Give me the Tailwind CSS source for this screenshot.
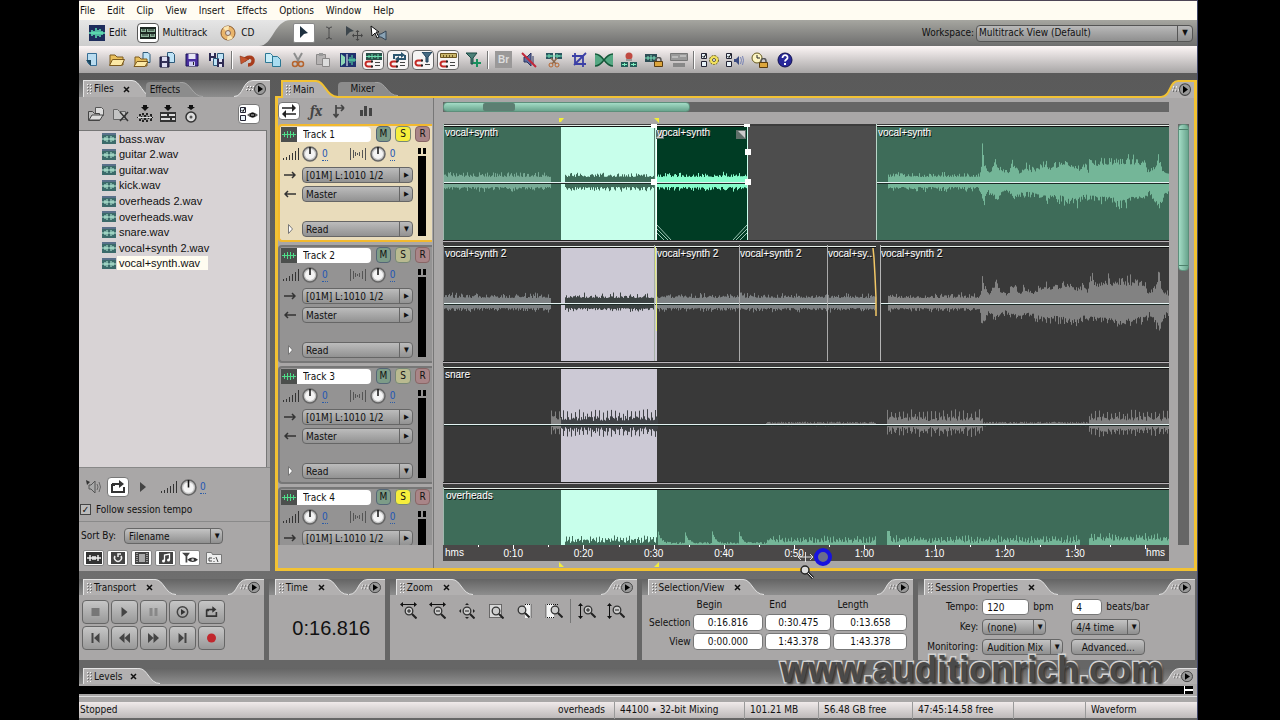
<!DOCTYPE html>
<html lang="en">
<head>
  <meta charset="UTF-8" />
  <title>Audition - Multitrack View</title>
  <meta name="viewport" content="width=device-width, initial-scale=1.0" />
  <script src="https://cdn.jsdelivr.net/npm/@tailwindcss/browser@4"></script>
  <style>
    body { font-family: "DejaVu Sans Condensed", "Liberation Sans", sans-serif; }
    .arial { font-family: "Liberation Sans", Arial, sans-serif; }
    .clip-label { text-shadow: 1px 1px 0 #000, 1px 0 0 #fff6; }
    .watermark { -webkit-text-stroke: 3px #d4d4d4; paint-order: stroke fill; text-shadow: 2px 2px 2px #333; }
  </style>
</head>
<body class="bg-black text-[10px] leading-[14px] text-[#111]">

  <!-- Icon sheet -->
  <svg class="hidden">
    <symbol id="tail" viewBox="0 0 24 17" preserveAspectRatio="none"><path d="M0 .5h2C11 .5 12 16.5 23 16.5V17H0z" fill="#b2b0b0"/><path d="M0 .5h2C11 .5 12 16.5 23 16.5" fill="none" stroke="#e4e4e4"/></symbol>
    <symbol id="tail-dim" viewBox="0 0 24 17" preserveAspectRatio="none"><path d="M0 .5h2C11 .5 12 16.5 23 16.5V17H0z" fill="#8c8c8c"/><path d="M0 .5h2C11 .5 12 16.5 23 16.5" fill="none" stroke="#a8a8a8"/></symbol>
    <symbol id="tail-gold" viewBox="0 0 24 17" preserveAspectRatio="none"><path d="M0 1h2C11 1 12 16 23 16V17H0z" fill="#b2b0b0"/><path d="M0 1h2C11 1 12 16 24 16" fill="none" stroke="#f2c233" stroke-width="2"/></symbol>
    <symbol id="dots" viewBox="0 0 8 12"><path d="M1 1h1v1H1zM4 1h1v1H4zM1 4h1v1H1zM4 4h1v1H4zM1 7h1v1H1zM4 7h1v1H4zM1 10h1v1H1zM4 10h1v1H4z" fill="#f4f4f4"/><path d="M2 2h1v1H2zM5 2h1v1H5zM2 5h1v1H2zM5 5h1v1H5zM2 8h1v1H2zM5 8h1v1H5z" fill="#666"/></symbol>
    <symbol id="menu-end" viewBox="0 0 36 17" preserveAspectRatio="none"><path d="M0 16.5C10 16.5 8 .5 19 .5H36V17H0z" fill="#b2b0b0"/><path d="M0 16.5C10 16.5 8 .5 19 .5H36" fill="none" stroke="#e4e4e4"/><path d="M12 9h1v1h-1zM15 9h1v1h-1zM18 9h1v1h-1zM13 6h1v1h-1zM16 6h1v1h-1zM19 6h1v1h-1z" fill="#fff"/><path d="M13 10h1v1h-1zM16 10h1v1h-1zM14 7h1v1h-1zM17 7h1v1h-1z" fill="#555"/><circle cx="26" cy="9" r="5.5" fill="#999" stroke="#444"/><path d="M24 5.5v7l5-3.500z" fill="#000"/></symbol>
    <symbol id="menu-end-gold" viewBox="0 0 36 17" preserveAspectRatio="none"><path d="M0 16C10 16 8 1 17 1H36V17H0z" fill="#b2b0b0"/><path d="M0 16C10 16 8 1 17 1H36" fill="none" stroke="#f2c233" stroke-width="2"/><path d="M11 9h1v1h-1zM14 9h1v1h-1zM17 9h1v1h-1zM12 6h1v1h-1zM15 6h1v1h-1z" fill="#fff"/><path d="M12 10h1v1h-1zM15 10h1v1h-1zM13 7h1v1h-1z" fill="#555"/><circle cx="24" cy="9" r="5.500" fill="#999" stroke="#444"/><path d="M22 5.500v7l5-3.500z" fill="#000"/><path d="M34.500 0v17" stroke="#f2c233" stroke-width="3"/></symbol>
    <symbol id="close" viewBox="0 0 7 7"><path d="M1 1l5 5M6 1L1 6" stroke="#111" stroke-width="1.500"/></symbol>

    <symbol id="i-wave" viewBox="0 0 16 16"><path d="M0 0h16v16H0z" fill="#1d2c5c"/><path d="M0 8h16M3 5v6M5 6v4M7 3v10M9 5v6M11 4v8M13 6v4" stroke="#5fe3b4" stroke-width="1.500"/></symbol>
    <symbol id="i-multi" viewBox="0 0 16 16"><path d="M0 2h16v12H0z" fill="#1c2722"/><path d="M1 4h5v3H1zM7 4h8v3H7zM1 9h8v3H1zM10 9h5v3h-5z" fill="#8fb59c"/><path d="M2 5h3M8 5h6M2 10h6M11 10h3" stroke="#1c2722"/></symbol>
    <symbol id="i-cd" viewBox="0 0 16 16"><circle cx="8" cy="8" r="7" fill="#e9b56b" stroke="#8a5a2e"/><path d="M8 8L3 3a7 7 0 0 1 6-2zM8 8l5 5a7 7 0 0 1-6 2z" fill="#fbe7b4"/><circle cx="8" cy="8" r="2.500" fill="#ddd" stroke="#865"/></symbol>
    <symbol id="i-arrow" viewBox="0 0 16 16"><path d="M4 1l8 7-4 1-4 4z" fill="#1f3140"/></symbol>
    <symbol id="i-ibeam" viewBox="0 0 16 16"><path d="M5 2q3 0 3 2q0-2 3-2M8 3v10M5 14q3 0 3-2q0 2 3 2" stroke="#4c4c4c" fill="none"/></symbol>
    <symbol id="i-move" viewBox="0 0 18 16"><path d="M1 1l8 5-4 1-4 4z" fill="#3d464c"/><path d="M8 10.500h9M12.500 6v9" stroke="#444"/><path d="M7 10.500l2-2v4zM18 10.500l-2-2v4zM12.500 5l-2 2h4zM12.500 16l-2-2h4z" fill="#444"/></symbol>
    <symbol id="i-scrub" viewBox="0 0 18 16"><path d="M1 1l8 6H6l3 5-2 1-2-5-3 3z" fill="#fff" stroke="#111"/><path d="M9 9h2l5-3v9l-5-3H9z" fill="#8aa3b5" stroke="#345"/></symbol>

    <symbol id="i-new" viewBox="0 0 16 16"><path d="M3.500 1.500h9v12h-6l-3-3z" fill="#b9dcf0" stroke="#356d95"/><path d="M2 8h5v6z" fill="#18465f"/></symbol>
    <symbol id="i-open" viewBox="0 0 18 16"><path d="M2 13V3h5l2 2h6v8z" fill="#e9bf5c" stroke="#7c5a1e"/><path d="M1.500 13.500l3-6h12l-3 6z" fill="#fce9a6" stroke="#7c5a1e"/></symbol>
    <symbol id="i-open2" viewBox="0 0 18 16"><path d="M10 .5h5l2 2v8h-7z" fill="#bfe3f6" stroke="#2d5a7a"/><path d="M2 14V5h4l2 2h6v7z" fill="#e9bf5c" stroke="#7c5a1e"/><path d="M1 14.500l3-5h11l-3 5z" fill="#fce9a6" stroke="#7c5a1e"/></symbol>
    <symbol id="i-save" viewBox="0 0 16 16"><path d="M2 2h12v12H2z" fill="#4a2f9e" stroke="#1b1556"/><path d="M4.500 2h7v5h-7z" fill="#e6e6f5"/><path d="M5 9.500h6V14H5z" fill="#cfcff2"/><path d="M9 10h1v3H9z" fill="#222"/></symbol>
    <symbol id="i-save2" viewBox="0 0 18 16"><path d="M9.500.5h5l2 2v8h-7z" fill="#bfe3f6" stroke="#2d5a7a"/><path d="M2 5h9v10H2z" fill="#353258" stroke="#15143a"/><path d="M4 5h5v4H4zM4 11h5v4H4z" fill="#dcdcf0"/></symbol>
    <symbol id="i-saveall" viewBox="0 0 18 16"><path d="M1 1h7v8H1z" fill="#2e2b52"/><path d="M3 1h3v3H3zM3 6h3v3H3z" fill="#e5e5f4"/><path d="M9.500 1.500h6v7h-6zM5.500 6.500h5v7h-5z" fill="#bfe3f6" stroke="#2d5a7a"/><path d="M9 7h7v8H9z" fill="#2e2b52"/><path d="M11 7h3v3h-3zM11 12h3v3h-3z" fill="#e5e5f4"/></symbol>
    <symbol id="i-undo" viewBox="0 0 18 16"><path d="M5 9C7 4 15 4 14 9c0 2-2 4-5 4" fill="none" stroke="#a83c1c" stroke-width="3.500"/><path d="M1 4l9 3-8 5z" fill="#c4552e" stroke="#7a2a10" stroke-width=".5"/></symbol>
    <symbol id="i-copy" viewBox="0 0 18 16"><path d="M1.500 1.500h5l2 2v7h-7z" fill="#c9edf8" stroke="#2b7794"/><path d="M8.500 4.500h5l3 3v7h-8z" fill="#a9dcf0" stroke="#2b7794"/></symbol>
    <symbol id="i-cut" viewBox="0 0 16 16"><path d="M4 1l5 9M12 1L7 10" stroke="#8d8d8d" stroke-width="2"/><circle cx="5" cy="12" r="2.500" fill="none" stroke="#b5642e" stroke-width="1.500"/><circle cx="11" cy="12" r="2.500" fill="none" stroke="#b5642e" stroke-width="1.500"/></symbol>
    <symbol id="i-paste" viewBox="0 0 16 16"><path d="M1.500 2.500h9v10h-9z" fill="#b5b2b2" stroke="#8a8888"/><path d="M4 1h4v3H4z" fill="#999"/><path d="M7.500 6.500h7v8h-7z" fill="#ddd" stroke="#8a8888"/></symbol>
    <symbol id="i-session" viewBox="0 0 16 16"><path d="M0 1h16v14H0z" fill="#20306e"/><path d="M1 2l4 3v6l-4 3z" fill="#8fd7b6"/><path d="M7 2v12" stroke="#fff"/><path d="M8 8h8M10 5v6M12 3v10M14 6v4" stroke="#58e3a8"/></symbol>
    <symbol id="magnet" viewBox="0 0 10 8"><path d="M8 1.500H4a2.500 2.500 0 0 0 0 5h4" fill="none" stroke="#c32a26" stroke-width="2"/><path d="M7 .5h2v2H7zM7 5.500h2v2H7z" fill="#222"/></symbol>
    <symbol id="i-snap1" viewBox="0 0 18 16"><path d="M2 1h16v7H2z" fill="#29504a"/><path d="M2 4.500h16M5 3v3M8 2v5M11 3v3M14 2v5" stroke="#6fdfb0"/><use href="#magnet" x="0" y="8" width="10" height="8"/><path d="M11 10h5v1h-5zM11 13h5v1h-5z" fill="#444"/></symbol>
    <symbol id="i-snap2" viewBox="0 0 18 16"><path d="M5 7V3h8M16 3v4H9" stroke="#2c5670" stroke-width="2" fill="none"/><path d="M12 0l4 3-4 3zM10 4l-4 3 4 3z" fill="#2c5670"/><use href="#magnet" x="0" y="8" width="10" height="8"/><path d="M11 10h5v1h-5zM11 13h5v1h-5z" fill="#444"/></symbol>
    <symbol id="i-snap3" viewBox="0 0 18 16"><path d="M8 0h10l-4 5v5h-2V5z" fill="#476b83" stroke="#1d3f59"/><use href="#magnet" x="0" y="7" width="10" height="8"/><path d="M11 12h5v1h-5z" fill="#444"/></symbol>
    <symbol id="i-snap4" viewBox="0 0 18 16"><path d="M1.500 1.500h16v4h-16z" fill="#c9b56a" stroke="#6a5520"/><path d="M4.500 3v3M7.500 3v3M10.500 3v3M13.500 3v3" stroke="#6a5520"/><use href="#magnet" x="0" y="8" width="10" height="8"/><path d="M11 10h5v1h-5zM11 13h5v1h-5z" fill="#444"/></symbol>
    <symbol id="i-funnel" viewBox="0 0 16 16"><path d="M1 1h11L8 6v6H6V6z" fill="#4b8078" stroke="#1d4a45"/><path d="M12 7v8M8 11h8" stroke="#19905e" stroke-width="2"/></symbol>
    <symbol id="i-mute" viewBox="0 0 16 16"><path d="M3 5h3l4-4v13l-4-4H3z" fill="#5c6aa0" stroke="#2a3463"/><path d="M12 4v8" stroke="#2a3463"/><path d="M1 1l14 14" stroke="#c2283a" stroke-width="2"/></symbol>
    <symbol id="i-split" viewBox="0 0 16 16"><path d="M0 1h7v6H0zM9 1h7v6H9z" fill="#2b5660"/><path d="M0 4h16M3 2v4M5 3v2M11 2v4M13 3v2" stroke="#72e0b5"/><path d="M5 6l5 6M11 6l-5 6" stroke="#8b6a50" stroke-width="1.500"/><circle cx="5" cy="13" r="2" fill="none" stroke="#b8662f"/><circle cx="11" cy="13" r="2" fill="none" stroke="#b8662f"/></symbol>
    <symbol id="i-crop" viewBox="0 0 16 16"><path d="M4 1v11h11M1 4h11v11M3 13L15 1" stroke="#3b3fa6" stroke-width="1.800" fill="none"/></symbol>
    <symbol id="i-fade" viewBox="0 0 18 16"><path d="M0 2c9 0 9 12 18 12V2C9 2 9 14 0 14z" fill="#55a883"/><path d="M0 2c9 0 9 12 18 12M0 14C9 14 9 2 18 2" stroke="#15583a" fill="none" stroke-width="1.500"/></symbol>
    <symbol id="i-merge" viewBox="0 0 16 16"><circle cx="8" cy="4" r="3.500" fill="#c04a42"/><path d="M5 7h6v2H5z" fill="#999"/><path d="M0 10h7v5H0zM9 10h7v5H9z" fill="#245d59"/><path d="M1 12.500h5M10 12.500h5M3.500 11v3M12.500 11v3" stroke="#7ff0c0"/></symbol>
    <symbol id="padlock" viewBox="0 0 9 10"><path d="M2 5V3a2.500 2.500 0 0 1 5 0v2" fill="none" stroke="#555" stroke-width="1.500"/><path d="M.5 4.500h8v5h-8z" fill="#dda63c" stroke="#5a3d10"/></symbol>
    <symbol id="i-lock" viewBox="0 0 18 16"><path d="M0 2h12v8H0z" fill="#2d4d55"/><path d="M0 6h12M3 4v4M6 3v6M9 4v4" stroke="#7fe3bc"/><use href="#padlock" x="9" y="5" width="9" height="10"/></symbol>
    <symbol id="i-group" viewBox="0 0 18 16"><path d="M.5 1.500h17v7H.5z" fill="#999" stroke="#777"/><path d="M2 5h6M10 4h6" stroke="#ddd"/><path d="M3 11h12v4H3z" fill="#888"/></symbol>
    <symbol id="checks" viewBox="0 0 6 14"><path d="M.5.5h5v5h-5zM.5 8.500h5v5h-5z" fill="#e8f2f8" stroke="#223"/><path d="M1.500 3l1.500 1.500L5 1" stroke="#000" fill="none"/></symbol>
    <symbol id="i-gear" viewBox="0 0 18 16"><use href="#checks" x="0" y="1" width="6" height="14"/><circle cx="13" cy="8" r="4.500" fill="#f3e25c" stroke="#6b6020" stroke-dasharray="2 1"/><circle cx="13" cy="8" r="1.500" fill="#fff" stroke="#554"/></symbol>
    <symbol id="i-sound" viewBox="0 0 18 16"><use href="#checks" x="0" y="1" width="6" height="14"/><path d="M8 7h2l3-3v9l-3-3H8z" fill="#3b4a80"/><path d="M14.500 5q2 3 0 7M16.500 4q2 4 0 9" stroke="#7782b5" fill="none"/></symbol>
    <symbol id="i-clock" viewBox="0 0 18 16"><circle cx="6" cy="6" r="5" fill="#fdf5c4" stroke="#665a20"/><path d="M6 3v3h3" stroke="#222" fill="none"/><use href="#padlock" x="8" y="6" width="9" height="10"/></symbol>
    <symbol id="i-help" viewBox="0 0 16 16"><circle cx="8" cy="8" r="7" fill="#28289a" stroke="#11114f"/><path d="M5.500 6c0-4 5.500-3.500 5 0-.3 1.500-2.500 1.500-2.500 3.500" stroke="#fff" stroke-width="1.800" fill="none"/><path d="M7 11h2v2H7z" fill="#fff"/></symbol>

    <symbol id="i-fopen" viewBox="0 0 18 16"><path d="M8.500 1.500h6l2 2v6h-8z" fill="#ddd" stroke="#555"/><path d="M1.500 14.500v-9h4l2 2h5v7z" fill="#bbb" stroke="#444"/><path d="M2 14l3-5h11l-3 5z" fill="#ddd" stroke="#444"/></symbol>
    <symbol id="i-fclose" viewBox="0 0 18 16"><path d="M1.500 13.500v-10h4l2 2h6v8z" fill="#c4c4c4" stroke="#666"/><path d="M8 6l8 9M16 6l-8 9" stroke="#333" stroke-width="1.500"/></symbol>
    <symbol id="i-inswave" viewBox="0 0 16 18"><path d="M6 0h4v2h2L8 6 4 2h2z" fill="#111"/><path d="M0 12h2V9h2v2h1V8h2v2h2V8h2v3h2V9h2v3h1v1h-1v3h-2v-2h-2v3H9v-2H7v2H5v-3H4v2H2v-3H0z" fill="#222"/><path d="M1 12.500h14M3 11v3M6 10v5M10 10v5M13 11v3" stroke="#ddd"/></symbol>
    <symbol id="i-insmulti" viewBox="0 0 16 18"><path d="M6 0h4v2h2L8 6 4 2h2z" fill="#111"/><path d="M0 7h16v10H0z" fill="#333"/><path d="M1 9h6v2H1zM9 9h6v2H9zM1 13h9v2H1zM12 13h3v2h-3z" fill="#ddd"/></symbol>
    <symbol id="i-inscd" viewBox="0 0 16 18"><path d="M6 0h4v2h2L8 5 4 2h2z" fill="#111"/><circle cx="8" cy="12" r="5" fill="#ddd" stroke="#333" stroke-width="1.500"/><circle cx="8" cy="12" r="1.500" fill="#555"/></symbol>
    <symbol id="i-eye" viewBox="0 0 18 14"><use href="#checks" x="0" y="0" width="6" height="14"/><path d="M7 8q5-5 11 0q-5 5-11 0z" fill="#555"/><circle cx="12.500" cy="8" r="2.500" fill="#111"/><path d="M11 8h3" stroke="#ccc"/></symbol>
    <symbol id="i-fileico" viewBox="0 0 14 11"><path d="M0 0h14v11H0z" fill="#3b6a6a"/><path d="M0 0h14v2H0z" fill="#59708a"/><path d="M0 6h14M3 4v4M5 3v6M9 3v6M11 4v4" stroke="#bff5de"/></symbol>
    <symbol id="i-swap" viewBox="0 0 16 16"><path d="M1 5h13M2 11h13" stroke="#222" stroke-width="1.500"/><path d="M11 1l4 4-4 4zM5 7l-4 4 4 4z" fill="#222"/></symbol>
    <symbol id="i-send" viewBox="0 0 16 16"><path d="M4 2v12M4 5h8M12 5l-3-3M12 5l-3 3M1.500 11L4 14l2.500-3" stroke="#444" stroke-width="1.700" fill="none"/></symbol>
    <symbol id="i-eq" viewBox="0 0 16 16"><path d="M2 7h3v6H2zM6 3h3v10H6zM11 5h3v8h-3z" fill="#444"/></symbol>
    <symbol id="i-vol" viewBox="0 0 16 12"><path d="M.5 10v2M3.500 9v3M6.500 7v5M9.500 5v7M12.500 3v9M15.500 0v12" stroke="#333"/></symbol>
    <symbol id="i-pan" viewBox="0 0 16 12"><path d="M.5 0v12M3.500 2v8M5.500 4v4M7.500 5v2M9.500 4v4M12.500 2v8M15.500 0v12" stroke="#555"/></symbol>
    <symbol id="i-knob" viewBox="0 0 16 16"><circle cx="8" cy="8" r="7" fill="#c4c4c4" stroke="#666" stroke-width="1.500"/><circle cx="8" cy="8" r="5" fill="#f4f4f4"/><path d="M8 1v7" stroke="#111" stroke-width="1.500"/></symbol>
    <symbol id="i-in" viewBox="0 0 12 8"><path d="M0 4h11M8 1l3 3-3 3" stroke="#333" stroke-width="1.500" fill="none"/></symbol>
    <symbol id="i-out" viewBox="0 0 12 8"><path d="M12 4H1M4 1L1 4l3 3" stroke="#333" stroke-width="1.500" fill="none"/></symbol>
    <symbol id="i-trk" viewBox="0 0 16 15"><path d="M0 0h16v15H0z" fill="#4c4f4d"/><path d="M1 7.500h14M3.500 5v5M6.500 4v7M9.500 4v7M12.500 5v5" stroke="#4fe08a"/></symbol>
    <symbol id="i-speaker" viewBox="0 0 16 14"><path d="M3 5h2l4-4v12l-4-4H3z" fill="#aaa" stroke="#555"/><path d="M11 4q2 3 0 6M13 2q3 5 0 10" stroke="#666" fill="none"/><path d="M0 0l4 2-3 3z" fill="#333"/></symbol>
    <symbol id="i-loop" viewBox="0 0 16 14"><path d="M5 5H2v7h12V7" stroke="#333" stroke-width="2" fill="none"/><path d="M2 4h8" stroke="#333" stroke-width="2"/><path d="M9 0l5 4-5 4z" fill="#333"/></symbol>
    <symbol id="i-play" viewBox="0 0 12 12"><path d="M3 1v10l6-5z" fill="#444"/></symbol>
    <symbol id="i-stop" viewBox="0 0 12 12"><path d="M2 2h8v8H2z" fill="#777"/></symbol>
    <symbol id="i-pause" viewBox="0 0 12 12"><path d="M2 2h3v8H2zM7 2h3v8H7z" fill="#888"/></symbol>
    <symbol id="i-playc" viewBox="0 0 12 12"><circle cx="6" cy="6" r="5.200" fill="none" stroke="#444" stroke-width="1.500"/><path d="M4.500 3v6l4.500-3z" fill="#333"/></symbol>
    <symbol id="i-first" viewBox="0 0 12 12"><path d="M2 1h2v10H2zM10 1v10L4.500 6z" fill="#444"/></symbol>
    <symbol id="i-last" viewBox="0 0 12 12"><path d="M8 1h2v10H8zM2 1v10l5.500-5z" fill="#444"/></symbol>
    <symbol id="i-rew" viewBox="0 0 12 12"><path d="M6 1v10L.5 6zM11.500 1v10L6 6z" fill="#444"/></symbol>
    <symbol id="i-ffw" viewBox="0 0 12 12"><path d="M.5 1v10L6 6zM6 1v10l5.500-5z" fill="#444"/></symbol>
    <symbol id="i-rec" viewBox="0 0 12 12"><circle cx="6" cy="6" r="4.500" fill="#c1272d"/></symbol>
    <symbol id="lens" viewBox="0 0 13 13"><circle cx="5" cy="5" r="3.800" fill="#ccc" stroke="#333" stroke-width="1.300"/><path d="M8 8l4.500 4.500" stroke="#222" stroke-width="2"/></symbol>
    <symbol id="z-inh" viewBox="0 0 18 18"><path d="M1 2.500h15" stroke="#111"/><path d="M0 2.500L3 0v5zM17 2.500L14 0v5z" fill="#111"/><use href="#lens" x="4" y="4" width="13" height="13"/><path d="M7 9h4M9 7v4" stroke="#222"/></symbol>
    <symbol id="z-outh" viewBox="0 0 18 18"><path d="M1 2.500h15" stroke="#111"/><path d="M0 2.500L3 0v5zM17 2.500L14 0v5z" fill="#111"/><use href="#lens" x="4" y="4" width="13" height="13"/><path d="M7 9h4" stroke="#222"/></symbol>
    <symbol id="z-full" viewBox="0 0 18 18"><path d="M1 9l2-2v4zM17 9l-2-2v4zM9 1l2 2H7zM9 17l2-2H7z" fill="#222"/><use href="#lens" x="4" y="4" width="13" height="13"/><path d="M7 9h4" stroke="#222"/></symbol>
    <symbol id="z-sel" viewBox="0 0 18 18"><path d="M2.500 2.500h12v13h-12z" fill="#d8d8d8" stroke="#111" stroke-dasharray="1 1"/><use href="#lens" x="4" y="4" width="13" height="13"/></symbol>
    <symbol id="z-left" viewBox="0 0 18 18"><path d="M9 2h6v14H9z" fill="#f4f4f4"/><path d="M9 2.500h6v13" fill="none" stroke="#111" stroke-dasharray="1 1"/><use href="#lens" x="1" y="3" width="13" height="13"/></symbol>
    <symbol id="z-right" viewBox="0 0 18 18"><path d="M1 2h8v14H1z" fill="#f4f4f4"/><path d="M13 2.500H1v13h9" fill="none" stroke="#111" stroke-dasharray="1 1"/><use href="#lens" x="5" y="3" width="13" height="13"/></symbol>
    <symbol id="z-inv" viewBox="0 0 18 18"><path d="M2.500 2v14" stroke="#111"/><path d="M2.500 1L0 4h5zM2.500 17L0 14h5z" fill="#111"/><use href="#lens" x="5" y="3" width="13" height="13"/><path d="M8 8h4M10 6v4" stroke="#222"/></symbol>
    <symbol id="z-outv" viewBox="0 0 18 18"><path d="M2.500 2v14" stroke="#111"/><path d="M2.500 1L0 4h5zM2.500 17L0 14h5z" fill="#111"/><use href="#lens" x="5" y="3" width="13" height="13"/><path d="M8 8h4" stroke="#222"/></symbol>
    <symbol id="f-wave" viewBox="0 0 16 12"><path d="M0 0h16v12H0z" fill="#333"/><path d="M1 6h14M4 3v6M7 4v4M9 4v4M12 3v6" stroke="#eee" stroke-width="1.500"/></symbol>
    <symbol id="f-loop" viewBox="0 0 16 12"><path d="M1 0h14v12H1z" fill="#444"/><path d="M5 4a3.500 3.500 0 1 0 6 0M11 2H8v3" stroke="#eee" stroke-width="1.500" fill="none"/></symbol>
    <symbol id="f-film" viewBox="0 0 16 12"><path d="M1 0h14v12H1z" fill="#444"/><path d="M5 2h6v8H5z" fill="#aaa"/><path d="M3 1v10M13 1v10" stroke="#eee" stroke-dasharray="1 1"/></symbol>
    <symbol id="f-note" viewBox="0 0 16 12"><path d="M1 0h14v12H1z" fill="#444"/><path d="M6.500 9V3l5-1v6" stroke="#fff" fill="none" stroke-width="1.300"/><circle cx="5.500" cy="9" r="1.500" fill="#fff"/><circle cx="10.500" cy="8" r="1.500" fill="#fff"/></symbol>
    <symbol id="f-eye" viewBox="0 0 18 12"><path d="M0 0h9L6 4v7H4V4z" fill="#444"/><path d="M6 8q6-5 12 0q-6 5-12 0z" fill="#333"/><circle cx="12" cy="8" r="1.500" fill="#ccc"/></symbol>
    <symbol id="f-path" viewBox="0 0 16 12"><path d="M.5 11.500v-11h5l1 2h9v9z" fill="#eee" stroke="#777"/><path d="M3 6h3M3 6v3h3M8 6v1M8 9v1M10 5l2 5" stroke="#444" fill="none"/></symbol>
  </svg>

  <div class="mr-[82px] ml-[79px] flex h-screen flex-col border-r border-[#3d4468] bg-[#666]">

    <nav class="flex h-5 shrink-0 items-center gap-3 border-t border-[#4d4556] bg-[#fffcf2] pl-px">
      <button>File</button><button>Edit</button><button>Clip</button><button>View</button><button>Insert</button><button>Effects</button><button>Options</button><button>Window</button><button>Help</button>
    </nav>

    <!-- Mode switch, tools and workspace -->
    <div class="flex h-[26px] shrink-0 items-center bg-linear-to-b from-[#a6a6a0] to-[#6e6e6e] pr-1">
      <div class="flex h-full items-center bg-linear-to-b from-[#e6e6e6] to-[#cdcdcd] pl-[10px]">
        <button class="flex items-center gap-1"><svg class="size-4"><use href="#i-wave"/></svg>Edit</button>
        <button class="ml-[11px] flex items-center gap-[3px]"><span class="flex h-5 w-[22px] items-center justify-center rounded-sm border border-[#555] bg-white"><svg class="size-4"><use href="#i-multi"/></svg></span>Multitrack</button>
        <button class="ml-[13px] flex items-center gap-[5px]"><svg class="size-4"><use href="#i-cd"/></svg>CD</button>
      </div>
      <svg class="h-[26px] w-[38px]" viewBox="0 0 38 26"><defs><linearGradient id="modeg" x2="0" y2="1"><stop stop-color="#e6e6e6"/><stop offset="1" stop-color="#cdcdcd"/></linearGradient></defs><path d="M0 0h36C19 0 18 26 4 26H0z" fill="url(#modeg)"/></svg>
      <div class="flex items-center gap-[3px]">
        <button aria-label="Hybrid tool" class="flex h-5 w-[22px] items-center justify-center rounded-xs border border-[#888] bg-white"><svg class="size-4"><use href="#i-arrow"/></svg></button>
        <button aria-label="Time selection" class="flex w-[22px] justify-center"><svg class="size-4"><use href="#i-ibeam"/></svg></button>
        <button aria-label="Move clip" class="flex w-[22px] justify-center"><svg class="h-4 w-[18px]"><use href="#i-move"/></svg></button>
        <button aria-label="Scrub" class="flex w-[22px] justify-center"><svg class="h-4 w-[18px]"><use href="#i-scrub"/></svg></button>
      </div>
      <label for="workspace" class="mr-[2px] ml-auto">Workspace:</label>
      <div class="relative w-[217px]">
        <select id="workspace" class="block h-[17px] w-full appearance-none rounded-sm border border-[#555] bg-linear-to-b from-[#b9b9b9] to-[#8f8f8f] pl-[2px] leading-[14px]"><option>Multitrack View (Default)</option></select>
        <span class="pointer-events-none absolute inset-y-px right-px flex w-[15px] items-center justify-center border-l border-[#555] text-[8px]">▼</span>
      </div>
    </div>

    <div id="toolbar" class="flex h-[27px] shrink-0 items-center bg-linear-to-b from-[#fdf6f6] to-[#a8a6a6]"></div>

    <!-- Files panel and session view -->
    <div class="flex min-h-0 flex-1 gap-[5px] bg-linear-to-b from-[#5a5a5a] to-[#6e6e6e] pt-[7px] pb-2">

      <section class="flex w-[191px] shrink-0 flex-col">
        <div class="flex h-[17px] items-end bg-linear-to-b from-[#646464] to-[#8e8e8e] pl-1">
          <div class="flex h-[17px] items-center border-t border-l border-[#e4e4e4] bg-[#b2b0b0] pl-[2px]"><svg class="h-3 w-2"><use href="#dots"/></svg>Files<button aria-label="Close Files" class="ml-[9px]"><svg class="size-[7px]"><use href="#close"/></svg></button></div>
          <svg class="h-[17px] w-6"><use href="#tail"/></svg>
          <button class="-ml-2 h-[15px] rounded-tl-sm bg-[#8c8c8c] pl-1">Effects</button>
          <svg class="h-[15px] w-6"><use href="#tail-dim"/></svg>
          <svg class="ml-auto h-[17px] w-9"><use href="#menu-end"/></svg>
        </div>
        <div class="flex min-h-0 flex-1 flex-col bg-[#a9a7a7]">
          <div class="flex h-[33px] shrink-0 items-center gap-[7px] pl-2">
            <button aria-label="Import file"><svg class="h-4 w-[18px]"><use href="#i-fopen"/></svg></button>
            <button aria-label="Close file"><svg class="h-4 w-[18px]"><use href="#i-fclose"/></svg></button>
            <button aria-label="Edit file"><svg class="h-[18px] w-4"><use href="#i-inswave"/></svg></button>
            <button aria-label="Insert into multitrack"><svg class="h-[18px] w-4"><use href="#i-insmulti"/></svg></button>
            <button aria-label="Insert into CD list"><svg class="h-[18px] w-4"><use href="#i-inscd"/></svg></button>
            <button aria-label="Show options" class="mr-[10px] ml-auto flex h-5 w-[22px] items-center justify-center rounded-sm border border-[#777] bg-white"><svg class="h-[14px] w-[18px]"><use href="#i-eye"/></svg></button>
          </div>
          <div class="arial mr-[3px] min-h-0 flex-1 border-t border-r border-[#777] bg-[#d8d3d5] pl-[23px] text-[11px]">
            <ul id="files" class="flex h-[140px] flex-col justify-between"></ul>
          </div>
          <div class="border-t border-[#888] pt-2">
            <div class="flex h-[22px] items-center pl-[7px]">
              <svg class="h-[14px] w-4"><use href="#i-speaker"/></svg>
              <button aria-label="Loop preview" class="ml-[5px] flex h-5 w-[22px] items-center justify-center rounded-sm border border-[#777] bg-white"><svg class="h-[14px] w-4"><use href="#i-loop"/></svg></button>
              <button aria-label="Preview" class="ml-2"><svg class="size-3"><use href="#i-play"/></svg></button>
              <svg class="ml-3 h-3 w-4"><use href="#i-vol"/></svg>
              <svg class="ml-[3px] size-[17px]"><use href="#i-knob"/></svg>
              <span class="ml-[3px] border-b border-dotted border-[#2b5ca8] leading-[12px] text-[#1f56b3]">0</span>
            </div>
            <label class="flex h-6 items-center gap-[5px] border-b border-[#8a8a8a] pl-px"><input type="checkbox" checked class="flex size-[11px] appearance-none items-center justify-center border border-[#444] bg-[#bbb] before:text-[10px] before:leading-none before:font-bold before:content-['✓']" />Follow session tempo</label>
            <div class="mt-[6px] flex h-4 items-center pl-[2px]">
              <label for="sort">Sort By:</label>
              <div class="relative ml-[8px] w-[99px]">
                <select id="sort" class="block h-4 w-full appearance-none rounded-sm border border-[#666] bg-linear-to-b from-[#c4c4c4] to-[#8f8f8f] pl-1 leading-[13px]"><option>Filename</option></select>
                <span class="pointer-events-none absolute inset-y-px right-0 flex w-[13px] items-center justify-center border-l border-[#666] text-[7px]">▼</span>
              </div>
            </div>
            <div id="filters" class="flex h-[27px] items-center gap-[3px] pl-1"></div>
          </div>
        </div>
      </section>

      <section class="flex min-w-0 flex-1 flex-col">
        <div class="relative z-10 -mb-[2px] flex h-[18px] items-end pl-[6px]">
          <div class="flex h-[18px] items-center border-t-2 border-l-2 border-[#f2c233] bg-[#b2b0b0] pl-[2px]"><svg class="h-3 w-2"><use href="#dots"/></svg>Main</div>
          <svg class="h-[18px] w-6"><use href="#tail-gold"/></svg>
          <button class="mb-[2px] h-[14px] rounded-tl-sm bg-[#8c8c8c] pl-3 leading-[14px]">Mixer</button>
          <svg class="mb-[2px] h-[14px] w-6"><use href="#tail-dim"/></svg>
          <svg class="ml-auto h-[18px] w-9"><use href="#menu-end-gold"/></svg>
        </div>
        <div class="flex min-h-0 flex-1 border-x-3 border-t-2 border-b-3 border-[#f2c233] bg-[#a9a7a7]">

          <!-- Track controls -->
          <div class="flex w-[156px] shrink-0 flex-col border-r border-[#777] pb-[23px]">
            <div class="flex h-[26px] shrink-0 items-center gap-[10px]">
              <button aria-label="Inputs and outputs" class="flex h-[18px] w-[22px] items-center justify-center rounded-sm border border-[#777] bg-white"><svg class="size-4"><use href="#i-swap"/></svg></button>
              <button aria-label="Effects" class="font-serif text-[15px] leading-5 font-bold text-[#444] italic">fx</button>
              <button aria-label="Sends"><svg class="size-4"><use href="#i-send"/></svg></button>
              <button aria-label="EQ"><svg class="size-4"><use href="#i-eq"/></svg></button>
            </div>
            <div id="heads" class="min-h-0 flex-1 overflow-hidden"></div>
          </div>

          <!-- Timeline -->
          <div class="ml-[9px] flex min-w-0 flex-1 flex-col">
            <div class="mt-1 h-[10px] shrink-0 bg-[#666]">
              <div class="h-full w-[34%] rounded-sm border border-[#5d8f7b] bg-linear-to-b from-[#a4dcc6] to-[#69a58e]"><div class="ml-[16%] h-full w-[13%] rounded-xs bg-[#5c7f72]"></div></div>
            </div>
            <div class="relative h-3 shrink-0">
              <svg class="absolute top-[6px] left-[16%] size-[5px]" viewBox="0 0 5 5"><path d="M0 0h5L2 4H0z" fill="#f2ee3a"/></svg>
              <svg class="absolute top-[6px] left-[29%] size-[5px]" viewBox="0 0 5 5"><path d="M0 0h5v5z" fill="#f2ee3a"/></svg>
            </div>
            <div id="lanes" class="min-h-0 flex-1 overflow-hidden bg-[#3c3c3c]"></div>
            <div id="ruler" class="arial relative h-4 shrink-0 bg-[#4a4848] leading-4 text-white"></div>
            <div class="relative h-[7px] shrink-0">
              <svg class="absolute top-px left-[16%] size-[5px]" viewBox="0 0 5 5"><path d="M0 0l5 5H0z" fill="#f2ee3a"/></svg>
              <svg class="absolute top-px left-[29%] size-[5px]" viewBox="0 0 5 5"><path d="M5 0v5H0z" fill="#f2ee3a"/></svg>
            </div>
          </div>
          <div class="mt-[26px] mr-[5px] mb-[23px] ml-[9px] w-[11px] shrink-0 bg-[#666]">
            <div class="h-[35%] rounded-sm border border-[#5d8f7b] bg-linear-to-r from-[#a4dcc6] to-[#69a58e] py-1"><div class="h-full border-y border-[#4d806b]"></div></div>
          </div>
        </div>
      </section>
    </div>

    <!-- Lower panels -->
    <div class="grid h-[81px] shrink-0 grid-cols-[185fr_114fr_247fr_272fr_277fr] gap-[5px] pr-[2px]">
      <section class="flex flex-col bg-[#a9a7a7]">
        <div class="flex h-4 items-end bg-linear-to-b from-[#646464] to-[#8e8e8e] pl-1">
          <div class="flex h-4 items-center border-t border-l border-[#e4e4e4] bg-[#b2b0b0] pl-[2px]"><svg class="h-3 w-2"><use href="#dots"/></svg>Transport<button aria-label="Close Transport" class="ml-[10px]"><svg class="size-[7px]"><use href="#close"/></svg></button></div>
          <svg class="h-4 w-6"><use href="#tail"/></svg>
          <svg class="ml-auto h-4 w-9"><use href="#menu-end"/></svg>
        </div>
        <div id="transport" class="mt-[5px] ml-[3px] grid w-[143px] grid-cols-5 gap-[2px]"></div>
      </section>
      <section class="flex flex-col bg-[#a9a7a7]">
        <div class="flex h-4 items-end bg-linear-to-b from-[#646464] to-[#8e8e8e] pl-[6px]">
          <div class="flex h-4 items-center border-t border-l border-[#e4e4e4] bg-[#b2b0b0] pl-[2px]"><svg class="h-3 w-2"><use href="#dots"/></svg>Time<button aria-label="Close Time" class="ml-[10px]"><svg class="size-[7px]"><use href="#close"/></svg></button></div>
          <svg class="h-4 w-6"><use href="#tail"/></svg>
          <svg class="ml-auto h-4 w-9"><use href="#menu-end"/></svg>
        </div>
        <div class="arial mt-[23px] pl-[9px] text-center text-[20px] leading-[20px]">0:16.816</div>
      </section>
      <section class="flex flex-col bg-[#a9a7a7]">
        <div class="flex h-4 items-end bg-linear-to-b from-[#646464] to-[#8e8e8e] pl-[6px]">
          <div class="flex h-4 items-center border-t border-l border-[#e4e4e4] bg-[#b2b0b0] pl-[2px]"><svg class="h-3 w-2"><use href="#dots"/></svg>Zoom<button aria-label="Close Zoom" class="ml-[10px]"><svg class="size-[7px]"><use href="#close"/></svg></button></div>
          <svg class="h-4 w-6"><use href="#tail"/></svg>
          <svg class="ml-auto h-4 w-9"><use href="#menu-end"/></svg>
        </div>
        <div id="zoom" class="mt-1 ml-[10px] flex items-center gap-[11px]"></div>
      </section>
      <section class="flex flex-col bg-[#a9a7a7]">
        <div class="flex h-4 items-end bg-linear-to-b from-[#646464] to-[#8e8e8e] pl-[6px]">
          <div class="flex h-4 items-center border-t border-l border-[#e4e4e4] bg-[#b2b0b0] pl-[2px]"><svg class="h-3 w-2"><use href="#dots"/></svg>Selection/View<button aria-label="Close Selection/View" class="ml-[10px]"><svg class="size-[7px]"><use href="#close"/></svg></button></div>
          <svg class="h-4 w-6"><use href="#tail"/></svg>
          <svg class="ml-auto h-4 w-9"><use href="#menu-end"/></svg>
        </div>
        <table class="mt-px mr-1 ml-1 table-fixed border-separate border-spacing-[2px]">
          <thead><tr class="text-left"><td class="w-[43px]"></td><th class="pl-1 font-normal">Begin</th><th class="pl-1 font-normal">End</th><th class="pl-1 font-normal">Length</th></tr></thead>
          <tbody id="selview"></tbody>
        </table>
      </section>
      <section class="flex flex-col bg-[#a9a7a7]">
        <div class="flex h-4 items-end bg-linear-to-b from-[#646464] to-[#8e8e8e] pl-[6px]">
          <div class="flex h-4 items-center border-t border-l border-[#e4e4e4] bg-[#b2b0b0] pl-[2px]"><svg class="h-3 w-2"><use href="#dots"/></svg>Session Properties<button aria-label="Close Session Properties" class="ml-[10px]"><svg class="size-[7px]"><use href="#close"/></svg></button></div>
          <svg class="h-4 w-6"><use href="#tail"/></svg>
          <svg class="ml-auto h-4 w-9"><use href="#menu-end"/></svg>
        </div>
        <div class="mt-1 grid grid-cols-[60px_85px_1fr] items-center gap-x-1 gap-y-1">
          <label for="tempo" class="text-right">Tempo:</label>
          <div class="flex items-center gap-1"><input id="tempo" value="120" class="h-4 w-[47px] rounded-sm border border-[#777] bg-white pl-1" />bpm</div>
          <div class="flex items-center gap-1"><input id="beats" value="4" class="h-4 w-[31px] rounded-sm border border-[#777] bg-white pl-1" /><label for="beats">beats/bar</label></div>
          <label for="key" class="text-right">Key:</label>
          <div class="relative w-[64px]"><select id="key" class="block h-4 w-full appearance-none rounded-sm border border-[#666] bg-linear-to-b from-[#c4c4c4] to-[#8f8f8f] pl-1 leading-[13px]"><option>(none)</option></select><span class="pointer-events-none absolute inset-y-px right-0 flex w-[13px] items-center justify-center border-l border-[#666] text-[7px]">▼</span></div>
          <div class="relative w-[69px]"><select aria-label="Time signature" class="block h-4 w-full appearance-none rounded-sm border border-[#666] bg-linear-to-b from-[#c4c4c4] to-[#8f8f8f] pl-1 leading-[13px]"><option>4/4 time</option></select><span class="pointer-events-none absolute inset-y-px right-0 flex w-[13px] items-center justify-center border-l border-[#666] text-[7px]">▼</span></div>
          <label for="monitoring" class="text-right">Monitoring:</label>
          <div class="relative w-[81px]"><select id="monitoring" class="block h-4 w-full appearance-none rounded-sm border border-[#666] bg-linear-to-b from-[#c4c4c4] to-[#8f8f8f] pl-1 leading-[13px]"><option>Audition Mix</option></select><span class="pointer-events-none absolute inset-y-px right-0 flex w-[13px] items-center justify-center border-l border-[#666] text-[7px]">▼</span></div>
          <button class="h-4 w-[74px] rounded-sm border border-[#666] bg-linear-to-b from-[#c4c4c4] to-[#8f8f8f] leading-[13px]">Advanced...</button>
        </div>
      </section>
    </div>

    <!-- Levels -->
    <section class="relative mt-2 flex h-[34px] shrink-0 flex-col bg-[#a9a7a7]">
      <div class="flex h-4 items-end bg-linear-to-b from-[#646464] to-[#8e8e8e] pl-1">
        <div class="flex h-4 items-center border-t border-l border-[#e4e4e4] bg-[#b2b0b0] pl-[2px]"><svg class="h-3 w-2"><use href="#dots"/></svg>Levels<button aria-label="Close Levels" class="ml-2"><svg class="size-[7px]"><use href="#close"/></svg></button></div>
        <svg class="h-4 w-6"><use href="#tail"/></svg>
        <svg class="ml-auto h-4 w-9"><use href="#menu-end"/></svg>
      </div>
      <div class="mt-[2px] mr-1 flex h-2 items-center justify-end bg-black"><div class="h-2 w-[9px] border-l border-white"><div class="mt-[3px] h-[2px] bg-white"></div></div></div>
      <div class="mt-[2px] h-[2px] border-t border-[#e0e0e0]"></div>
      <div class="arial watermark pointer-events-none absolute -top-[18px] right-[34px] text-[36px] leading-[40px] font-bold text-[#4a4a4a]">www.auditionrich.com</div>
    </section>

    <footer class="mb-[2px] flex h-4 shrink-0 items-center bg-linear-to-b from-[#f0eaea] to-[#bdb9b9] leading-[18px]">
      <span class="grow pl-px">Stopped</span>
      <span class="border-r border-[#999] pr-[9px]">overheads</span>
      <span class="w-[130px] border-r border-[#999] pl-[5px]">44100 • 32-bit Mixing</span>
      <span class="w-[74px] border-r border-[#999] pl-[5px]">101.21 MB</span>
      <span class="w-[94px] border-r border-[#999] pl-[5px]">56.48 GB free</span>
      <span class="w-[101px] border-r border-[#999] pl-[5px]">47:45:14.58 free</span>
      <span class="h-4 w-[72px] border-r border-[#999]"></span>
      <span class="w-[111px] pl-[5px]">Waveform</span>
    </footer>
  </div>

  <script>
    const $ = id => document.getElementById(id);

    // toolbar: '|' is a separator, a trailing '*' marks a pressed button
    const tools = ['new:New', 'open:Open', 'open2:Open session', 'save2:Save as', 'save:Save', 'saveall:Save all', '|',
      'undo:Undo', 'copy:Copy', 'cut:Cut', 'paste:Paste', 'session:Session', 'snap1:Snap to clips*', 'snap2:Snap to loops*', 'snap3:Snap to markers*', 'snap4:Snap to ruler*', 'funnel:Add marker', '|',
      'br:Bridge', 'mute:Mute', 'split:Split', 'crop:Crop', 'fade:Crossfade', 'merge:Merge', 'lock:Lock in time', 'group:Group', '|',
      'gear:Session settings', 'sound:Audio settings', 'clock:Schedule', 'help:Help'];
    $('toolbar').innerHTML = tools.map(t => {
      if (t === '|') return '<div class="mx-[2px] h-[18px] w-[2px] border-r border-white bg-[#777]"></div>';
      const [icon, name] = t.replace('*', '').split(':');
      const box = t.endsWith('*') ? 'flex h-5 w-[22px] items-center justify-center rounded-sm border border-[#666] bg-[#f6f4f4]' : 'flex h-5 w-[22px] items-center justify-center';
      const art = icon === 'br'
        ? '<span class="arial size-[17px] bg-[#9a9898] text-center text-[10px] leading-[17px] font-bold text-[#ddd]">Br</span>'
        : `<svg class="h-4 w-[18px]"><use href="#i-${icon}"/></svg>`;
      return `<div class="flex w-[25px] shrink-0 justify-center"><button aria-label="${name}" class="${box}">${art}</button></div>`;
    }).join('');

    $('files').innerHTML = ['bass', 'guitar 2', 'guitar', 'kick', 'overheads 2', 'overheads', 'snare', 'vocal+synth 2', 'vocal+synth'].map((f, i) =>
      `<li class="flex h-4 items-center gap-px"><svg class="h-[11px] w-[14px]"><use href="#i-fileico"/></svg><span class="${i === 8 ? 'w-[91px] bg-[#fffcf0] pl-[2px]' : 'pl-[2px]'}">${f}.wav</span></li>`).join('');

    $('filters').innerHTML = ['wave:Audio', 'loop:Loops', 'film:Video', 'note:MIDI', 'eye:Filter', 'path:Paths'].map(f => {
      const [icon, name] = f.split(':');
      return `<button aria-label="${name}" class="${icon === 'path' ? 'flex h-4 w-[21px] items-center justify-center' : 'flex h-4 w-[21px] items-center justify-center rounded-xs border border-[#888] bg-white'}"><svg class="h-3 w-4"><use href="#f-${icon}"/></svg></button>`;
    }).join('');

    $('transport').innerHTML = ['stop:Stop', 'play:Play', 'pause:Pause', 'playc:Play to end', 'loop:Loop', 'first:Go to start', 'rew:Rewind', 'ffw:Fast forward', 'last:Go to end', 'rec:Record'].map(b => {
      const [icon, name] = b.split(':');
      return `<button aria-label="${name}" class="flex h-6 items-center justify-center rounded-sm border border-[#666] bg-linear-to-b from-[#c6c6c6] to-[#999]"><svg class="h-3 w-[13px]"><use href="#i-${icon}"/></svg></button>`;
    }).join('');

    $('zoom').innerHTML = ['inh:Zoom in', 'outh:Zoom out', 'full:Zoom full', 'sel:Zoom to selection', 'left:Zoom to left edge', 'right:Zoom to right edge', 'inv:Zoom in vertically', 'outv:Zoom out vertically'].map(b => {
      const [icon, name] = b.split(':');
      return (icon === 'inv' ? '<div class="-mx-[4px] h-6 w-px bg-[#777]"></div>' : '') + `<button aria-label="${name}"><svg class="size-[18px]"><use href="#z-${icon}"/></svg></button>`;
    }).join('');

    $('selview').innerHTML = [['Selection', '0:16.816', '0:30.475', '0:13.658'], ['View', '0:00.000', '1:43.378', '1:43.378']].map(([name, ...cells]) =>
      `<tr><th class="text-right font-normal">${name}</th>` + cells.map((c, i) => `<td><input aria-label="${name} ${['begin', 'end', 'length'][i]}" value="${c}" class="block h-[17px] w-full rounded-sm border border-[#777] bg-white text-center" /></td>`).join('') + '</tr>').join('');

    const drop = (name, text, arrow) =>
      `<div class="relative ml-[6px] w-[111px]"><select aria-label="${name}" class="block h-4 w-full appearance-none rounded-sm border border-[#666] bg-linear-to-b from-[#bcbcbc] to-[#929292] pl-[3px] leading-[13px]"><option>${text}</option></select><span class="pointer-events-none absolute inset-y-px right-0 flex w-[14px] items-center justify-center border-l border-[#666] text-[7px]">${arrow}</span></div>`;

    $('heads').innerHTML = [1, 2, 3, 4].map(n => {
      const frame = n === 1 ? 'border-[#f2b92e] bg-[#e9dcbb]' : 'border-[#777] bg-[#949393]';
      const solo = n === 1 || n === 4 ? 'bg-[#f6ee3c]' : 'bg-[#b9ba90]';
      const knob = '<svg class="size-4"><use href="#i-knob"/></svg><span class="ml-1 border-b border-dotted border-[#2b5ca8] leading-[12px] text-[#1f56b3]">0</span>';
      return `<div class="mr-px mb-[3px] flex h-[118px] flex-col rounded-l-sm border-2 border-r-0 pl-px ${frame}">
        <div class="flex h-4 items-center">
          <svg class="h-[15px] w-4"><use href="#i-trk"/></svg>
          <input aria-label="Track name" value="Track ${n}" class="h-[15px] w-[74px] rounded-r-sm bg-white pl-[6px]" />
          <button class="ml-[5px] h-4 w-[15px] rounded-sm border border-[#567] bg-[#7d9c88] leading-[14px]">M</button>
          <button class="ml-1 h-4 w-4 rounded-sm border border-[#787] leading-[14px] ${solo}">S</button>
          <button class="ml-1 h-4 w-[15px] rounded-sm border border-[#866] bg-[#a98588] leading-[14px]">R</button>
        </div>
        <div class="flex">
          <div class="w-[137px]">
            <div class="mt-1 flex h-4 items-center pl-[2px]">
              <svg class="mr-[3px] h-3 w-4"><use href="#i-vol"/></svg>${knob}
              <svg class="mr-1 ml-[22px] h-3 w-4"><use href="#i-pan"/></svg>${knob}
            </div>
            <div class="mt-[5px] flex items-center pl-[3px]"><svg class="h-2 w-3"><use href="#i-in"/></svg>${drop('Input', '[01M] L:1010 1/2', '▶')}</div>
            <div class="mt-[3px] flex items-center pl-[3px]"><svg class="h-2 w-3"><use href="#i-out"/></svg>${drop('Output', 'Master', '▶')}</div>
            <div class="mt-[19px] flex items-center pl-[3px]"><svg class="h-3 w-3" viewBox="0 0 12 12"><path d="M4.500 1.500v9l4-4.500z" fill="#fff" stroke="#777"/></svg>${drop('Automation mode', 'Read', '▼')}</div>
          </div>
          <div class="mt-[6px] flex flex-col gap-[2px]">
            <div class="flex gap-[2px]"><div class="h-[6px] w-[3px] bg-black"></div><div class="h-[6px] w-[3px] bg-black"></div></div>
            <div class="h-20 w-2 bg-black"></div>
          </div>
        </div>
      </div>`;
    }).join('');

    // Waveforms, drawn one column per unit on a 726-unit timeline
    let seed = 7;
    const rnd = () => (seed = (seed * 16807) % 2147483647) / 2147483647;
    const lerp = (knots, x) => {
      for (let i = 1; i < knots.length; i++) {
        const [a, b] = [knots[i - 1], knots[i]];
        if (x <= b[0]) return a[1] + (b[1] - a[1]) * (x - a[0]) / (b[0] - a[0]);
      }
      return knots[knots.length - 1][1];
    };
    const upper = [[536, 8], [538, 14], [539, 31], [541, 17], [546, 10], [552, 22], [556, 15], [564, 9], [570, 20], [576, 11], [582, 16], [590, 12], [602, 20], [606, 16], [614, 18], [624, 22], [636, 14], [640, 20], [645, 12], [647, 28], [652, 21], [664, 23], [680, 23], [695, 23], [702, 22], [704, 12], [711, 15], [715, 29], [719, 14], [726, 9]];
    const lower = [[536, 7], [540, 22], [545, 10], [552, 16], [562, 9], [572, 14], [586, 12], [602, 17], [612, 16], [624, 18], [633, 21], [640, 15], [655, 18], [668, 18], [674, 22], [690, 18], [702, 17], [706, 11], [716, 27], [722, 12], [726, 10]];
    const quiet = () => [5 + rnd() * rnd() * 6, 5 + rnd() * rnd() * 5];
    const loud = x => [lerp(upper, x) * (.75 + rnd() * rnd() * .6), lerp(lower, x) * (.8 + rnd() * rnd() * .6)];
    const hits = x => (x % 4 === 0 ? [10 + rnd() * 5, 9 + rnd() * 4] : [3 + rnd() * 5, 3 + rnd() * 5]);
    const faint = () => [.5 + rnd() * 1.8, .5 + rnd() * 1.8];
    const cymbal = x => [x % 3 === 0 ? 5 + rnd() * 5 : 2 + rnd() * 4, 5];
    const decay = x => [1 + 11 * Math.exp(-((x - 215) % 27) / 3) + rnd() * 2, 5];
    const wave = (from, to, fn, color) => {
      let d = '';
      for (let x = from; x < to; x++) {
        const [u, l] = fn(x);
        d += `M${x + .5} ${(58 - u).toFixed(1)}V${(58 + l).toFixed(1)}`;
      }
      return `<path d="${d}" stroke="${color}"/>`;
    };
    const box = (x, w, color) => `<rect x="${x}" y="2" width="${w}" height="114" fill="${color}"/>`;
    const edge = (x, color) => `<path d="M${x + .5} 0v116" stroke="${color}"/>`;
    const axis = (x1, x2) => `<path d="M${x1} 58.500H${x2}" stroke="#e4f2f2"/><path d="M${x1} 59.500H${x2}" stroke="#1c2a26"/>`;
    const rim = (x1, x2) => `<path d="M${x1} 1.500H${x2}" stroke="#e6efe9"/><path d="M${x1} 2.500H${x2}" stroke="#111"/>`;

    const lanes = [
      { art: box(0, 726, '#4d4d4d') + box(0, 118, '#3e6c59') + box(118, 95, '#c8ffeb') + box(213, 92, '#003c24') + box(433, 293, '#3e6c59')
          + wave(0, 108, quiet, '#78ab96') + wave(122, 212, quiet, '#3e6c59') + wave(213, 305, quiet, '#86fccb') + wave(445, 537, quiet, '#74b698') + wave(537, 726, loud, '#74b698')
          + axis(0, 305) + axis(433, 726) + rim(0, 305) + rim(433, 726) + edge(0, '#9fb8ad') + edge(433, '#b9d6c9') + edge(211, '#5a7a6c') + edge(213, '#fff') + edge(304, '#cfe')
          + '<path d="M214 105l11 11M214 109l7 7M214 101l14 15M304 105l-11 11M304 109l-7 7M304 101l-14 15" stroke="#9cc4b4"/><path d="M213 6h8v9h-8zM293 6h10v9h-10z" fill="#5f6f69"/><path d="M295 7h7v7zM213 14l7-7v7z" fill="#ccc"/>'
          + '<path d="M208 0h5v4h-5zM301 0h6v3h-6zM302 25h6v6h-6zM302 55h6v6h-6zM208 55h6v6h-6z" fill="#fff"/>',
        labels: [[0, 'vocal+synth'], [212, 'vocal+synth'], [433, 'vocal+synth']] },
      { art: box(0, 726, '#393939') + box(118, 96, '#ccc9d5')
          + wave(0, 108, quiet, '#7e8284') + wave(122, 212, quiet, '#3c4343') + wave(214, 433, quiet, '#7e8284') + wave(445, 537, quiet, '#828282') + wave(537, 726, loud, '#828282')
          + axis(0, 433) + axis(437, 726) + rim(0, 433) + rim(437, 726) + edge(0, '#888') + edge(211, '#a6b0a6') + edge(296, '#aaa') + edge(384, '#aaa') + edge(437, '#b5b5b5')
          + '<path d="M212.500 2v22l1 22v40" stroke="#e6ef7a" fill="none"/><path d="M430 3l1 10 1 18 1 22v18" stroke="#f2c766" stroke-width="1.500" fill="none"/>',
        labels: [[0, 'vocal+synth 2'], [212, 'vocal+synth 2'], [295, 'vocal+synth 2'], [383, 'vocal+sy..'], [436, 'vocal+synth 2']] },
      { art: box(0, 726, '#393939') + box(118, 96, '#ccc9d5')
          + wave(108, 118, hits, '#828282') + wave(118, 215, hits, '#3f4246') + wave(323, 433, faint, '#777') + wave(444, 540, hits, '#808080') + wave(540, 646, faint, '#777') + wave(646, 726, hits, '#808080')
          + axis(0, 726) + rim(0, 726) + edge(0, '#888'),
        labels: [[0, 'snare']] },
      { art: box(0, 726, '#3e6c59') + box(118, 96, '#c8ffeb')
          + wave(122, 214, cymbal, '#3e6c59') + wave(215, 323, decay, '#74b698') + wave(323, 433, cymbal, '#74b698') + wave(444, 447, () => [14, 5], '#74b698') + wave(447, 637, cymbal, '#74b698') + wave(646, 726, x => cymbal(x).map(v => v + 2), '#74b698')
          + rim(0, 726) + edge(0, '#9fb8ad'),
        labels: [[1, 'overheads']] }
    ];
    $('lanes').innerHTML = lanes.map(l => `<div class="relative h-[121px]">
      <svg class="h-[116px] w-full" viewBox="0 0 726 116" preserveAspectRatio="none">${l.art}</svg>
      <div class="h-[2px] border-b border-[#b9b3b8] bg-[#222]"></div>
      ${l.labels.map(([x, t]) => `<span class="arial clip-label absolute top-[2px] ml-[2px] whitespace-nowrap text-white" style="left:${x / 7.26}%">${t}</span>`).join('')}
    </div>`).join('');

    let ruler = '<span class="absolute left-[2px]">hms</span><span class="absolute right-[4px]">hms</span>';
    for (let s = 5; s < 103; s += 5) {
      const left = s / 1.03378;
      ruler += `<i class="absolute top-0 w-px bg-white ${s % 10 ? 'h-[2px]' : 'h-1'}" style="left:${left}%"></i>`;
      if (s % 10 === 0 && s < 100) ruler += `<span class="absolute top-px -translate-x-1/2" style="left:${left}%">${Math.floor(s / 60)}:${String(s % 60).padStart(2, '0')}</span>`;
    }
    // playback cursor ring and zoom pointer
    ruler += '<svg class="absolute -top-1 left-[48%] h-[38px] w-12" viewBox="0 0 48 38"><path d="M8 16h13M10 13l-3 3 3 3M19 13l3 3-3 3M14.500 11v10" stroke="#ddd" fill="none"/><circle cx="32" cy="16" r="7" fill="#6b6d8c" stroke="#1712e0" stroke-width="4"/><circle cx="14" cy="29" r="4" fill="#ddd" stroke="#222" stroke-width="1.500"/><path d="M17 32l5 5" stroke="#222" stroke-width="3"/><path d="M17 32l5 5" stroke="#eee"/></svg>';
    $('ruler').innerHTML = ruler;
  </script>
</body>
</html>
